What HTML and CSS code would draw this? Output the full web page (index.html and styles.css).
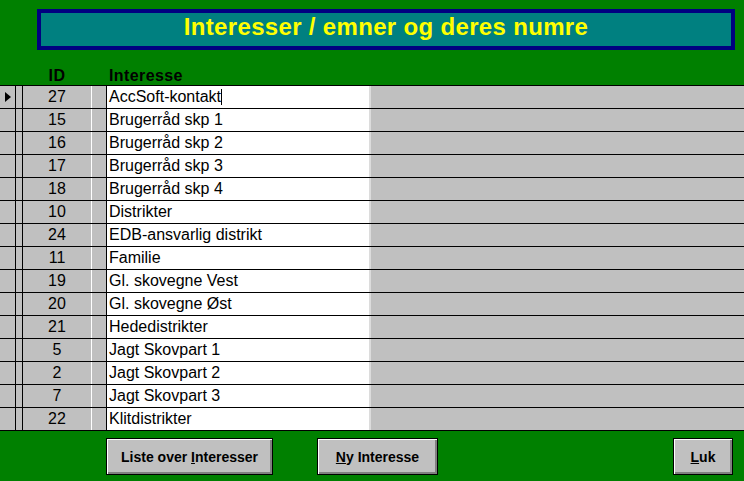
FILE: index.html
```html
<!DOCTYPE html>
<html>
<head>
<meta charset="utf-8">
<link rel="stylesheet" href="styles.css">
</head>
<body>
<div class="form">
  <div class="title">Interesser / emner og deres numre</div>
  <div class="head">
    <div class="h-id">ID</div>
    <div class="h-name">Interesse</div>
  </div>
  <div class="grid">
    <div class="row current"><div class="sel"><svg width="6" height="10" viewBox="0 0 6 10"><path d="M0 0 L6 5 L0 10 Z" fill="#000"/></svg></div><div class="sel2"></div><div class="id">27</div><div class="gap"></div><div class="name">AccSoft-kontakt<span class="caret"></span></div><div class="rest"></div></div>
    <div class="row"><div class="sel"></div><div class="sel2"></div><div class="id">15</div><div class="gap"></div><div class="name">Brugerråd skp 1</div><div class="rest"></div></div>
    <div class="row"><div class="sel"></div><div class="sel2"></div><div class="id">16</div><div class="gap"></div><div class="name">Brugerråd skp 2</div><div class="rest"></div></div>
    <div class="row"><div class="sel"></div><div class="sel2"></div><div class="id">17</div><div class="gap"></div><div class="name">Brugerråd skp 3</div><div class="rest"></div></div>
    <div class="row"><div class="sel"></div><div class="sel2"></div><div class="id">18</div><div class="gap"></div><div class="name">Brugerråd skp 4</div><div class="rest"></div></div>
    <div class="row"><div class="sel"></div><div class="sel2"></div><div class="id">10</div><div class="gap"></div><div class="name">Distrikter</div><div class="rest"></div></div>
    <div class="row"><div class="sel"></div><div class="sel2"></div><div class="id">24</div><div class="gap"></div><div class="name">EDB-ansvarlig distrikt</div><div class="rest"></div></div>
    <div class="row"><div class="sel"></div><div class="sel2"></div><div class="id">11</div><div class="gap"></div><div class="name">Familie</div><div class="rest"></div></div>
    <div class="row"><div class="sel"></div><div class="sel2"></div><div class="id">19</div><div class="gap"></div><div class="name">Gl. skovegne Vest</div><div class="rest"></div></div>
    <div class="row"><div class="sel"></div><div class="sel2"></div><div class="id">20</div><div class="gap"></div><div class="name">Gl. skovegne Øst</div><div class="rest"></div></div>
    <div class="row"><div class="sel"></div><div class="sel2"></div><div class="id">21</div><div class="gap"></div><div class="name">Hededistrikter</div><div class="rest"></div></div>
    <div class="row"><div class="sel"></div><div class="sel2"></div><div class="id">5</div><div class="gap"></div><div class="name">Jagt Skovpart 1</div><div class="rest"></div></div>
    <div class="row"><div class="sel"></div><div class="sel2"></div><div class="id">2</div><div class="gap"></div><div class="name">Jagt Skovpart 2</div><div class="rest"></div></div>
    <div class="row"><div class="sel"></div><div class="sel2"></div><div class="id">7</div><div class="gap"></div><div class="name">Jagt Skovpart 3</div><div class="rest"></div></div>
    <div class="row"><div class="sel"></div><div class="sel2"></div><div class="id">22</div><div class="gap"></div><div class="name">Klitdistrikter</div><div class="rest"></div></div>
  </div>
  <div class="buttons">
    <button class="btn btn-liste">Liste over <u>I</u>nteresser</button>
    <button class="btn btn-ny"><u>N</u>y Interesse</button>
    <button class="btn btn-luk"><u>L</u>uk</button>
  </div>
</div>
</body>
</html>
```

FILE: styles.css
```css
html, body {
  margin: 0;
  padding: 0;
  background: #008000;
}
.form {
  width: 744px;
  height: 481px;
  background: #008000;
  font-family: "Liberation Sans", Arial, sans-serif;
  overflow: hidden;
}
.title {
  box-sizing: border-box;
  margin: 9px 0 0 37px;
  width: 698px;
  height: 41px;
  border: 4px solid #000080;
  background: #008080;
  color: #ffff00;
  font-weight: bold;
  font-size: 24px;
  line-height: 27px;
  letter-spacing: 0.33px;
  text-align: center;
}
.head {
  display: flex;
  align-items: flex-end;
  height: 35px;
  font-size: 16px;
  font-weight: bold;
  line-height: 19px;
  letter-spacing: 0.4px;
  color: #000;
}
.h-id {
  margin-left: 23px;
  width: 68px;
  text-align: center;
}
.h-name {
  margin-left: 18px;
}
.grid {
  border-top: 1px solid #000;
}
.row {
  display: flex;
  height: 22px;
  border-bottom: 1px solid #000;
  background: #c0c0c0;
  font-size: 16px;
  line-height: 22px;
  color: #000;
}
.sel {
  box-sizing: border-box;
  width: 16px;
  border-right: 1px solid #000;
  display: flex;
  align-items: center;
  padding-left: 5px;
}
.sel2 {
  width: 6px;
  border-right: 1px solid #000;
}
.id {
  width: 68px;
  border-right: 1px solid #fff;
  text-align: center;
}
.gap {
  width: 14px;
  border-right: 1px solid #000;
}
.name {
  width: 260px;
  padding-left: 2px;
  background: #fff;
  border-right: 2px solid #dcdcdc;
  white-space: nowrap;
}
.caret {
  display: inline-block;
  width: 0;
  height: 16px;
  border-left: 1px solid #000;
  vertical-align: -3px;
}
.rest {
  flex: 1;
}
.buttons {
  display: flex;
  padding-top: 7px;
}
.btn {
  box-sizing: border-box;
  height: 37px;
  padding: 0;
  margin: 0;
  border: 1px solid #000;
  background: #c0c0c0;
  box-shadow: inset 1px 1px 0 #fff, inset -2px -2px 0 #808080;
  font-family: "Liberation Sans", Arial, sans-serif;
  font-weight: bold;
  font-size: 14px;
  color: #000;
  text-align: center;
}
.btn-liste {
  margin-left: 106px;
  width: 167px;
}
.btn-ny {
  margin-left: 44px;
  width: 121px;
}
.btn-luk {
  margin-left: 235px;
  width: 60px;
}
```
